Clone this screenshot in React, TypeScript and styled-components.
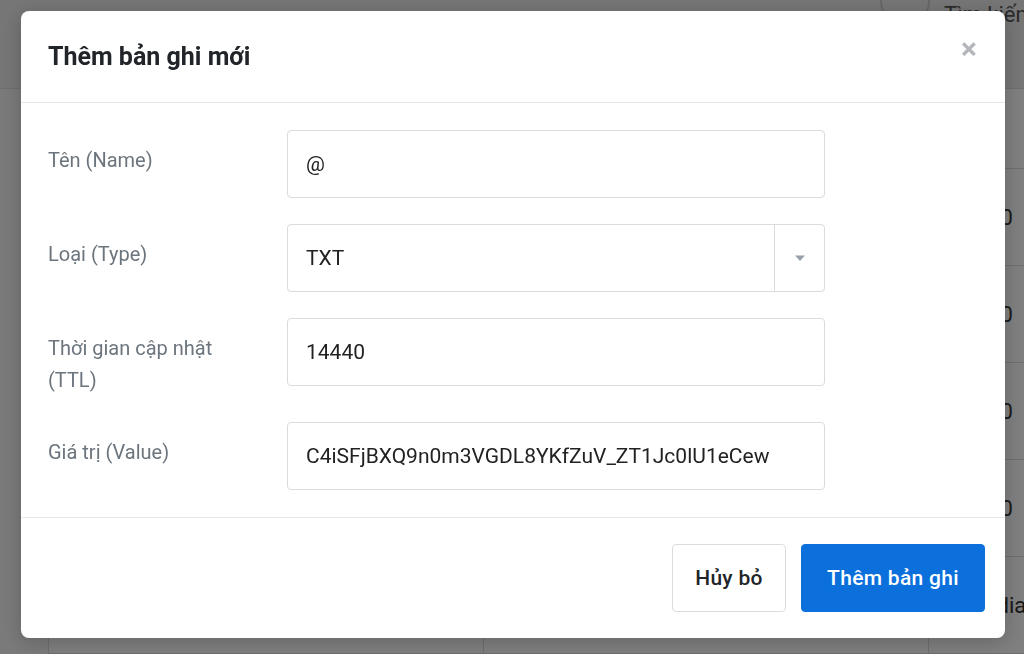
import React from "react";
import styled, { createGlobalStyle } from "styled-components";

const Global = createGlobalStyle`
  html, body { margin: 0; padding: 0; }
  body { font-family: Roboto, "Noto Sans", Arial, sans-serif; background: #fff; width: 1024px; height: 654px; overflow: hidden; }
`;

const Page = styled.div`
  width: 1024px; height: 654px; background: #f4f5f7; display: flex; flex-direction: column;
`;
const TopBar = styled.div`
  height: 130px; display: flex; justify-content: flex-end; padding: 0 0 0 880px; box-sizing: border-box; gap: 14px;
  background: #ececec; border-bottom: 1px solid #ddd;
`;
const Circle = styled.div`
  width: 50px; height: 50px; border: 2px solid #ccc; border-radius: 50%; margin-top: -24px; box-sizing: border-box;
`;
const Search = styled.div`
  flex: 1; font-size: 22px; color: #555; padding-top: 2px; white-space: nowrap; overflow: hidden;
`;
const Table = styled.div` display: flex; flex-direction: column; background: #fff; margin-left: 48px; `;
const TRow = styled.div<{ $h: number }>`
  height: ${p => p.$h}px; display: grid; grid-template-columns: 435px 445px 1fr; border-bottom: 1px solid #dcdcdc; box-sizing: border-box;
  font-size: 22px; color: #333;
`;
const TCell = styled.div`
  border-left: 1px solid #dcdcdc; padding: 0 8px 0 17px; display: flex; align-items: center; white-space: nowrap; overflow: hidden;
`;

const Overlay = styled.div`
  position: fixed; inset: 0; background: rgba(0,0,0,0.5);
`;
const Modal = styled.div`
  position: fixed; left: 21px; top: 11px; width: 984px; height: 627px; background: #fff; border-radius: 8px;
  display: flex; flex-direction: column; box-shadow: 0 4px 20px rgba(0,0,0,0.2);
`;
const Header = styled.div`
  height: 91px; display: flex; align-items: center; justify-content: space-between; padding: 0 28px 0 27px;
  border-bottom: 1px solid #e6e8eb;
`;
const Title = styled.h2` margin: 0; font-size: 25px; font-weight: 700; color: #212529; `;
const Close = styled.span` font-size: 30px; font-weight: 700; color: #b3b6ba; line-height: 1; margin-top: -16px; `;
const Body = styled.div` flex: 1; padding: 27px 180px 0 27px; border-bottom: 1px solid #e6e8eb; `;
const Row = styled.div` display: grid; grid-template-columns: 239px 1fr; margin-bottom: 26px; `;
const Label = styled.div` font-size: 20px; line-height: 32px; color: #6c757d; padding: 14px 40px 0 0; `;
const Input = styled.div`
  height: 68px; border: 1px solid #d9dcdf; border-radius: 4px; box-sizing: border-box; display: flex; align-items: center;
  font-size: 21px; color: #222; overflow: hidden; white-space: nowrap;
`;
const Text = styled.span`
  flex: 1; min-width: 0; padding: 0 17px 0 18px; overflow: hidden;
`;
const Caret = styled.div`
  width: 49px; height: 100%; border-left: 1px solid #d9dcdf; display: flex; align-items: center; justify-content: center;
`;
const Footer = styled.div` height: 120px; display: flex; justify-content: flex-end; align-items: center; gap: 15px; padding: 0 20px; `;
const Button = styled.button<{ $primary?: boolean }>`
  height: 68px; padding: 0 ${p => p.$primary ? 22 : 21}px; border-radius: 4px; font-family: inherit; font-size: 21px;
  font-weight: 500; cursor: pointer; letter-spacing: 0.3px;
  min-width: ${p => p.$primary ? 184 : 114}px;
  background: ${p => p.$primary ? "#0b6fdc" : "#fff"}; color: ${p => p.$primary ? "#fff" : "#212529"};
  border: 1px solid ${p => p.$primary ? "#0b6fdc" : "#d9dcdf"};
`;

export default function App() {
  return (
    <>
      <Global />
      <Page>
        <TopBar><Circle /><Search>Tìm kiếm</Search></TopBar>
        <Table>
          <TRow $h={80}><TCell>Loại</TCell><TCell>TTL</TCell><TCell>Value</TCell></TRow>
          {[0, 1, 2, 3].map(i => (
            <TRow key={i} $h={97}><TCell>A</TCell><TCell>14400</TCell><TCell>0.0.0.0</TCell></TRow>
          ))}
          <TRow $h={97}><TCell>CNAME</TCell><TCell>14400</TCell><TCell>rumedia.vn</TCell></TRow>
        </Table>
      </Page>
      <Overlay />
      <Modal>
        <Header><Title>Thêm bản ghi mới</Title><Close>×</Close></Header>
        <Body>
          <Row><Label>Tên (Name)</Label><Input><Text>@</Text></Input></Row>
          <Row><Label>Loại (Type)</Label><Input><Text>TXT</Text>
            <Caret><svg width="12" height="7" viewBox="0 0 12 7"><path d="M1 0.5h10L6 6z" fill="#9aa0a6" /></svg></Caret>
          </Input></Row>
          <Row><Label>Thời gian cập nhật (TTL)</Label><Input><Text>14440</Text></Input></Row>
          <Row><Label>Giá trị (Value)</Label><Input><Text>C4iSFjBXQ9n0m3VGDL8YKfZuV_ZT1Jc0lU1eCew</Text></Input></Row>
        </Body>
        <Footer><Button>Hủy bỏ</Button><Button $primary>Thêm bản ghi</Button></Footer>
      </Modal>
    </>
  );
}
